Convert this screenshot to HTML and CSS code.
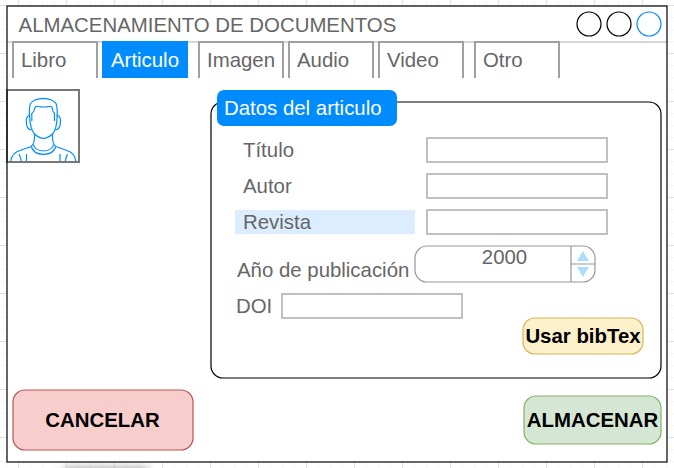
FILE: index.html
```
<!DOCTYPE html>
<html lang="es">
<head>
<meta charset="utf-8">
<title>Almacenamiento de documentos</title>
<link rel="stylesheet" href="styles.css">
</head>
<body>
<div class="shadow"></div>
<main class="window">
  <svg class="frame"><rect width="100%" height="100%"/></svg>
  <header class="titlebar">
    <h1>ALMACENAMIENTO DE DOCUMENTOS</h1>
    <svg class="controls" width="88" height="28" viewBox="0 0 88 28">
      <circle cx="14" cy="14" r="12"/><circle cx="44" cy="14" r="12"/><circle class="accent" cx="74" cy="14" r="12"/>
    </svg>
  </header>
  <nav class="tabs">
    <a class="tab">Libro</a>
    <a class="tab active">Articulo</a>
    <a class="tab spaced">Imagen</a>
    <a class="tab">Audio</a>
    <a class="tab">Video</a>
    <a class="tab spaced">Otro</a>
  </nav>
  <div class="content">
    <div class="avatar">
      <svg width="70" height="70" viewBox="8 91 70 70">
        <path d="M10.500 162 Q11.500 153 20 150.500 L31 146.500 Q35 144 34.500 134 M52.500 134 Q52 144 56 146.500 L67 150.500 Q75 153 76 162"/>
        <path d="M31.300 146.500 Q33 154 43.500 154.300 Q54 154 55.700 146.500 M33.500 144.500 Q34.500 150.500 43.500 151 Q52.500 150.500 53.500 144.500"/>
        <path d="M19 154 Q21 158 21.500 162 M26.500 154 V162 M67.500 154 Q66 158 65 162 M60 154 V162"/>
        <path d="M31.800 121 V113.500 Q34.500 111.500 35 107.500 Q36 106 38 106.500 Q43.500 107.500 49 106.500 Q51.500 106 52 107.500 Q52.500 111.500 54.500 113.500 V121"/>
        <path d="M29.500 116 Q29 107 30.500 103.500 Q34 98.500 43.300 98.300 Q52 98.500 56 103.500 Q57.500 107 57.200 116"/>
        <path d="M29.500 115 Q30 129 34.500 134 Q39 138.300 43.500 138.300 Q48 138.300 52.500 134 Q57 129 57.200 115"/>
        <path d="M29.500 115.500 Q26.300 116 26.300 121 Q26.300 130 31.500 130 M57.200 115.500 Q60.500 116 60.500 121 Q60.500 130 55.200 130"/>
      </svg>
    </div>
    <section class="group">
      <svg class="frame"><rect width="100%" height="100%" rx="12"/></svg>
      <h2>Datos del articulo</h2>
      <div class="row"><label>Título</label><span class="field"></span></div>
      <div class="row"><label>Autor</label><span class="field"></span></div>
      <div class="row"><label class="selected">Revista</label><span class="field"></span></div>
      <div class="year"><label>Año de publicación</label>
        <div class="spinner">
          <svg class="frame"><rect width="100%" height="100%" rx="12"/><path d="M156 0V36M156 18H180"/><path class="arrow" d="M168 5L174 15H162ZM162 21H174L168 31Z"/></svg>
          <span class="value">2000</span>
        </div>
      </div>
      <div class="doi"><label>DOI</label><span class="field"></span></div>
      <button class="btn bib"><svg class="frame"><rect width="100%" height="100%" rx="12"/></svg><span>Usar bibTex</span></button>
    </section>
  </div>
  <footer>
    <button class="btn cancel"><svg class="frame"><rect width="100%" height="100%" rx="12"/></svg><span>CANCELAR</span></button>
    <button class="btn save"><svg class="frame"><rect width="100%" height="100%" rx="12"/></svg><span>ALMACENAR</span></button>
  </footer>
</main>
</body>
</html>
```

FILE: styles.css
```
* { box-sizing: border-box; }
body {
  margin: 0;
  width: 674px;
  height: 468px;
  overflow: hidden;
  padding: 6px 0 0 7px;
  font: 20.4px/24px "Liberation Sans", Arial, sans-serif;
  color: #666;
  background-color: #fff;
  background-image:
    linear-gradient(90deg, #e2e2e2 1px, transparent 1px),
    linear-gradient(#e2e2e2 1px, transparent 1px),
    linear-gradient(90deg, #f6f6f6 1px, transparent 1px),
    linear-gradient(#f6f6f6 1px, transparent 1px);
  background-size: 48px 48px, 48px 48px, 12px 12px, 12px 12px;
  background-position: 18px 5px, 18px 5px, 6px 5px, 6px 5px;
}
h1, h2 { margin: 0; font-size: inherit; font-weight: normal; white-space: nowrap; }
.shadow {
  position: absolute;
  left: 66px;
  top: 470px;
  width: 80px;
  height: 10px;
  box-shadow: 0 0 9px 2px #999;
}
/* Outlines are centred on the edge of the box they surround. */
.frame {
  position: absolute;
  inset: 0;
  width: 100%;
  height: 100%;
  overflow: visible;
  fill: none;
  stroke: #000;
  stroke-width: 1.2;
}
.window { position: relative; width: 660px; height: 456px; background: #fff; }
.titlebar {
  display: flex;
  justify-content: space-between;
  height: 35px;
  padding: 7px 4px 0 11.6px;
}
.controls { margin-top: -3px; fill: none; stroke: #000; stroke-width: 1.2; }
.controls .accent { stroke: #008cff; }
.tabs {
  display: flex;
  gap: 4px;
  height: 37px;
  padding-left: 5px;
  border-top: 2px solid #d6d6d6;
}
.tab {
  width: 86px;
  height: 37px;
  margin-top: -2px;
  padding: 5px 0 0 7px;
  border: 2px solid #a0a0a0;
  border-bottom: 0;
}
.tab.active { background: #008cff; border-color: #008cff; color: #fff; }
.tab.spaced { margin-left: 6px; }
.content { display: flex; height: 312px; padding-top: 11px; }
.avatar { width: 74px; height: 74px; margin-left: -1px; border: 2px solid #777; }
.avatar svg { display: block; fill: none; stroke: #008cff; stroke-width: 1.2; }
.group {
  position: relative;
  width: 450px;
  height: 276px;
  margin: 13px 0 0 131px;
  padding-left: 24px;
}
.group h2 {
  position: relative;
  width: 180px;
  height: 36px;
  margin: -12px 0 12px -18px;
  padding: 6px 7px;
  border-radius: 7px;
  color: #fff;
  background: #008cff;
}
.row { display: flex; gap: 11px; height: 36px; }
.row label { width: 180px; height: 24px; padding-left: 8px; }
.field { width: 182px; height: 26px; margin-top: -1px; border: 2px solid #c0c0c0; }
.selected { background: #dbedff; }
.year { display: flex; height: 48px; padding-left: 2px; }
.year label { width: 178px; padding-top: 12px; white-space: nowrap; }
.spinner { position: relative; width: 180px; height: 36px; }
.spinner .frame { stroke: #999; }
.spinner .arrow { fill: #aaddff; stroke: none; }
.value { display: block; width: 179px; text-align: center; line-height: 23px; }
.doi { display: flex; height: 24px; }
.doi label { width: 46px; padding-left: 1px; }
.btn {
  position: relative;
  display: block;
  padding: 0;
  border: 0;
  background: none;
  font: bold 20.4px/24px "Liberation Sans", Arial, sans-serif;
  color: #000;
  white-space: nowrap;
}
.btn span { position: relative; }
.bib { width: 120px; height: 36px; margin-left: 288px; }
.bib .frame { fill: #fff0cc; stroke: #d6b656; }
footer { display: flex; justify-content: space-between; align-items: center; height: 60px; padding: 0 6px; }
.cancel { width: 180px; height: 60px; padding-right: 1px; }
.cancel .frame { fill: #f7cecc; stroke: #b85450; }
.save { width: 137px; height: 48px; }
.save .frame { fill: #d5e7d4; stroke: #82b366; }
```
